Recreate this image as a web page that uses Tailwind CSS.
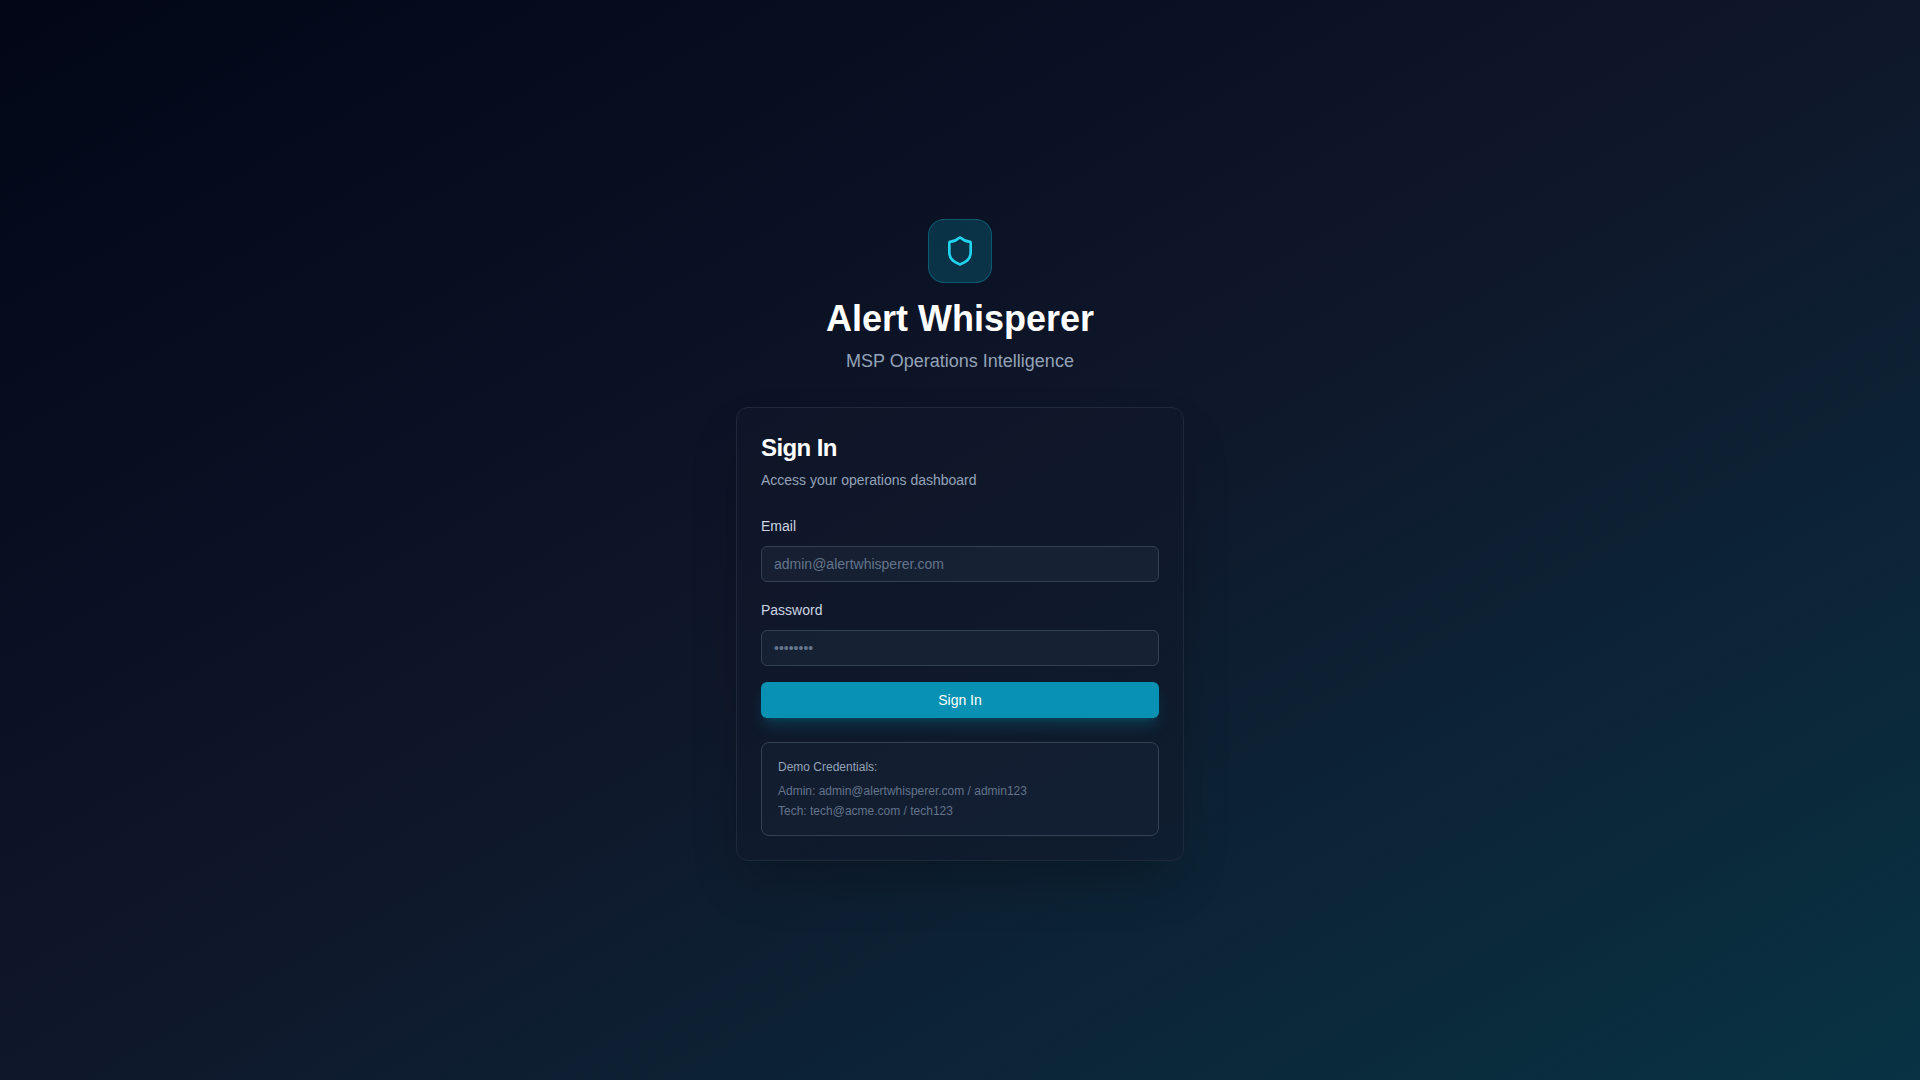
<!DOCTYPE html>
<html lang="en">
<head>
<meta charset="UTF-8">
<meta name="viewport" content="width=device-width, initial-scale=1">
<title>Alert Whisperer</title>
<script src="https://cdn.jsdelivr.net/npm/@tailwindcss/browser@4"></script>
</head>
<body class="font-['Liberation_Sans',Arial,sans-serif] text-white">
<main class="flex min-h-screen items-center justify-center bg-[linear-gradient(to_bottom_right,#020617,#0f172a,#083344)]">
  <div class="w-full max-w-md">
    <header class="mb-8 flex flex-col items-center text-center">
      <div class="mb-4 flex size-16 items-center justify-center rounded-2xl border border-[#06b6d4]/30 bg-[#06b6d4]/20">
        <svg class="size-8 text-[#22d3ee]" viewBox="0 0 24 24" fill="none" stroke="currentColor" stroke-width="2" stroke-linecap="round" stroke-linejoin="round" aria-hidden="true">
          <path d="M20 13c0 5-3.5 7.5-7.66 8.95a1 1 0 0 1-.67-.01C7.5 20.5 4 18 4 13V6a1 1 0 0 1 1-1c2 0 4.500-1.200 6.240-2.720a1.170 1.170 0 0 1 1.520 0C14.510 3.810 17 5 19 5a1 1 0 0 1 1 1z"/>
        </svg>
      </div>
      <h1 class="mb-2 text-4xl font-bold">Alert Whisperer</h1>
      <p class="text-lg leading-7 text-[#94a3b8]">MSP Operations Intelligence</p>
    </header>

    <section class="rounded-xl border border-[#1e293b] bg-[#0f172a]/50 p-6 shadow-2xl">
      <h2 class="text-2xl font-semibold tracking-tight">Sign In</h2>
      <p class="mt-1.5 text-sm text-[#94a3b8]">Access your operations dashboard</p>

      <form class="mt-6 flex flex-col gap-4">
        <div class="flex flex-col gap-2">
          <label for="email" class="text-sm leading-6 font-medium text-[#cbd5e1]">Email</label>
          <input id="email" type="email" placeholder="admin@alertwhisperer.com" class="h-9 w-full rounded-md border border-[#334155] bg-[#1e293b]/50 px-3 text-sm shadow-xs placeholder:text-[#64748b]">
        </div>
        <div class="flex flex-col gap-2">
          <label for="password" class="text-sm leading-6 font-medium text-[#cbd5e1]">Password</label>
          <input id="password" type="password" placeholder="••••••••" class="h-9 w-full rounded-md border border-[#334155] bg-[#1e293b]/50 px-3 text-sm shadow-xs placeholder:text-[#64748b]">
        </div>
        <button type="submit" class="h-9 w-full rounded-md bg-[#0891b2] text-sm font-medium shadow-lg shadow-[#06b6d4]/20">Sign In</button>
      </form>

      <div class="mt-6 rounded-lg border border-[#334155] bg-[#1e293b]/30 p-4 text-xs text-[#64748b]">
        <p class="mb-2 text-[#94a3b8]">Demo Credentials:</p>
        <div class="flex flex-col gap-1">
          <p>Admin: admin@alertwhisperer.com / admin123</p>
          <p>Tech: tech@acme.com / tech123</p>
        </div>
      </div>
    </section>
  </div>
</main>
</body>
</html>
